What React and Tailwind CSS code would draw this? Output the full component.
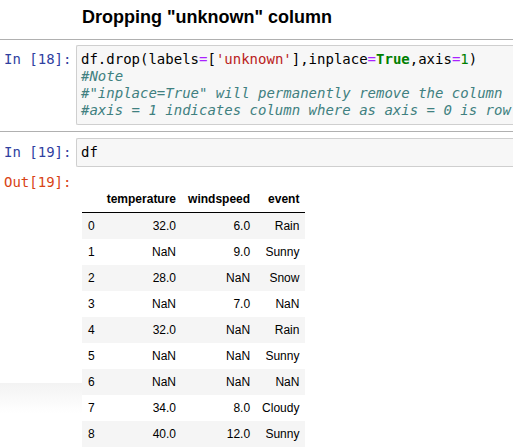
import React from "react";

const rows = [
  ["0", "32.0", "6.0", "Rain"],
  ["1", "NaN", "9.0", "Sunny"],
  ["2", "28.0", "NaN", "Snow"],
  ["3", "NaN", "7.0", "NaN"],
  ["4", "32.0", "NaN", "Rain"],
  ["5", "NaN", "NaN", "Sunny"],
  ["6", "NaN", "NaN", "NaN"],
  ["7", "34.0", "8.0", "Cloudy"],
  ["8", "40.0", "12.0", "Sunny"],
];

const mono = "font-['DejaVu_Sans_Mono',monospace] text-[14px] leading-[17px]";

const Prompt = ({ children, color }) => (
  <div className={`w-[76px] shrink-0 pl-[4px] whitespace-pre ${mono} ${color}`}>{children}</div>
);

export default function App() {
  return (
    <div className="w-[513px] h-[447px] overflow-hidden bg-white font-['Liberation_Sans',Arial,sans-serif] text-black">
      {/* Markdown heading */}
      <div className="h-[39px] pl-[82px] pt-[7px]">
        <h2 className="text-[18px] leading-[20px] font-bold">Dropping "unknown" column</h2>
      </div>
      <div className="border-t border-[#b0b0b0]" />

      {/* In [18] */}
      <div className="flex pt-[5px] pb-[6px]">
        <Prompt color="text-[#303f9f] pt-[6px]">In [18]:</Prompt>
        <div className={`flex-1 min-w-0 h-[80px] border border-[#cfcfcf] border-r-0 rounded-l-[2px] bg-[#f7f7f7] pl-[4px] pt-[5px] whitespace-pre overflow-hidden ${mono}`}>
          <div>
            df.drop(labels<span className="text-[#aa22ff]">=</span>[<span className="text-[#ba2121]">'unknown'</span>],inplace<span className="text-[#aa22ff]">=</span><span className="text-[#008000] font-bold">True</span>,axis<span className="text-[#aa22ff]">=</span><span className="text-[#008000]">1</span>)
          </div>
          <div className="italic text-[#408080]">#Note</div>
          <div className="italic text-[#408080]">#"inplace=True" will permanently remove the column</div>
          <div className="italic text-[#408080]">#axis = 1 indicates column where as axis = 0 is row</div>
        </div>
      </div>
      <div className="border-t border-[#b0b0b0]" />

      {/* In [19] */}
      <div className="flex pt-[6px]">
        <Prompt color="text-[#303f9f] pt-[6px]">In [19]:</Prompt>
        <div className={`flex-1 h-[29px] border border-[#cfcfcf] border-r-0 rounded-l-[2px] bg-[#f7f7f7] pl-[4px] pt-[5px] ${mono}`}>
          df
        </div>
      </div>

      {/* Out [19] */}
      <div className="flex">
        <div className="w-[82px] shrink-0 flex flex-col">
          <Prompt color="text-[#d84315] pt-[7px]">Out[19]:</Prompt>
          <div className="mt-[192px] h-[30px] bg-gradient-to-b from-[#f3f3f3] to-white" />
        </div>
        <table className="mt-[19px] border-collapse text-[12px] leading-[14px] self-start">
          <thead>
            <tr className="border-b border-black">
              <th className="px-[6px] py-[6px]"></th>
              <th className="px-[6px] py-[6px] text-right font-bold">temperature</th>
              <th className="px-[6px] py-[6px] text-right font-bold">windspeed</th>
              <th className="px-[6px] py-[6px] text-right font-bold">event</th>
            </tr>
          </thead>
          <tbody>
            {rows.map((r, i) => (
              <tr key={r[0]} className={i % 2 === 0 ? "bg-[#f5f5f5]" : "bg-white"}>
                <td className="px-[6px] py-[6px] text-left">{r[0]}</td>
                <td className="px-[6px] py-[6px] text-right">{r[1]}</td>
                <td className="px-[6px] py-[6px] text-right">{r[2]}</td>
                <td className="px-[6px] py-[6px] text-right">{r[3]}</td>
              </tr>
            ))}
          </tbody>
        </table>
      </div>
    </div>
  );
}
